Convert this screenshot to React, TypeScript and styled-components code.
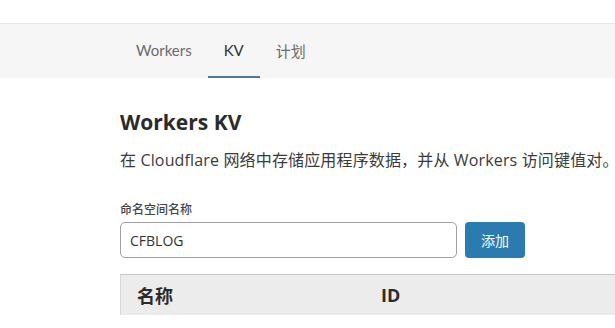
import React from "react";
import styled, { createGlobalStyle } from "styled-components";

const Global = createGlobalStyle`
  html, body { margin: 0; padding: 0; background: #fff; }
  body { width: 615px; height: 328px; overflow: hidden; font-family: "Open Sans", "Noto Sans CJK SC", sans-serif; color: #333; }
`;

const TopStrip = styled.div`
  height: 23px;
  border-bottom: 1px solid #e6e6e6;
  background: #fff;
`;

const NavBar = styled.nav`
  height: 54px;
  background: #f6f6f6;
  display: flex;
  padding-left: 120px;
`;

const Tab = styled.div<{ $active?: boolean }>`
  display: flex;
  align-items: center;
  padding: 0 16px;
  font-family: Lato, "Noto Sans CJK SC", sans-serif;
  font-size: 15px;
  color: ${(p) => (p.$active ? "#333" : "#6b6b6b")};
  border-bottom: 2px solid ${(p) => (p.$active ? "#4a7a9c" : "transparent")};
  box-sizing: border-box;
  height: 100%;
`;

const Content = styled.main`
  padding: 0 0 0 120px;
  overflow: hidden;
`;

const Title = styled.h1`
  margin: 29px 0 0;
  font-size: 21px;
  font-weight: 700;
  line-height: 30px;
  color: #2b2b2b;
`;

const Desc = styled.p`
  margin: 11px 0 0;
  font-size: 16px;
  line-height: 24px;
  letter-spacing: 0.15px;
  color: #3a3a3a;
  white-space: nowrap;
`;

const Label = styled.label`
  display: block;
  margin-top: 30px;
  font-size: 12px;
  line-height: 16px;
  color: #444;
  font-weight: 500;
`;

const Row = styled.div`
  display: flex;
  gap: 8px;
  margin-top: 4px;
`;

const Input = styled.input`
  width: 337px;
  height: 36px;
  box-sizing: border-box;
  border: 1px solid #a0a0a0;
  border-radius: 5px;
  padding: 0 9px;
  font-family: "Open Sans", "Noto Sans CJK SC", sans-serif;
  font-size: 14px;
  color: #333;
  outline: none;
`;

const Button = styled.button`
  width: 60px;
  height: 36px;
  border: none;
  border-radius: 4px;
  background: #2c7bb0;
  color: #fff;
  font-family: "Noto Sans CJK SC", sans-serif;
  font-size: 14px;
`;

const Table = styled.table`
  margin-top: 16px;
  width: 560px;
  border-collapse: collapse;
  border-top: 1px solid #c8c8c8;
  border-left: 1px solid #d8d8d8;
`;

const Th = styled.th<{ $w?: number }>`
  background: #ebeceb;
  height: 40px;
  text-align: left;
  padding: 0 0 0 16px;
  font-size: 18px;
  font-weight: 700;
  color: #2b2b2b;
  width: ${(p) => (p.$w ? `${p.$w}px` : "auto")};
`;

export default function App() {
  return (
    <>
      <Global />
      <TopStrip />
      <NavBar>
        <Tab>Workers</Tab>
        <Tab $active>KV</Tab>
        <Tab>计划</Tab>
      </NavBar>
      <Content>
        <Title>Workers KV</Title>
        <Desc>在 Cloudflare 网络中存储应用程序数据，并从 Workers 访问键值对。</Desc>
        <Label>命名空间名称</Label>
        <Row>
          <Input defaultValue="CFBLOG" />
          <Button>添加</Button>
        </Row>
        <Table>
          <thead>
            <tr>
              <Th $w={228}>名称</Th>
              <Th>ID</Th>
            </tr>
          </thead>
        </Table>
      </Content>
    </>
  );
}
